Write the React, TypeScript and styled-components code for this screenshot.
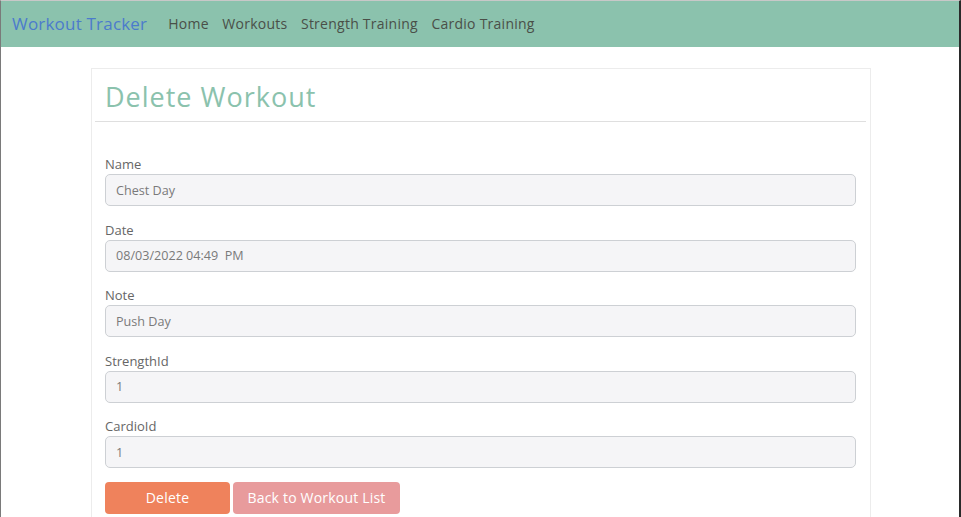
import React from "react";
import styled, { createGlobalStyle } from "styled-components";

const GlobalStyle = createGlobalStyle`
  html, body { margin: 0; padding: 0; }
  body {
    background: #fff;
    font-family: "Open Sans", "Liberation Sans", sans-serif;
    width: 961px;
    height: 517px;
    box-sizing: border-box;
    border-left: 1px solid #7a7a7a;
    border-top: 1px solid #c8c8c8;
    border-right: 2px solid #2a2a2a;
    overflow: hidden;
  }
`;

const NavBar = styled.nav`
  height: 46px;
  box-sizing: border-box;
  padding-bottom: 2px;
  background: #8bc2ad;
  display: flex;
  align-items: center;
  padding-left: 11px;
  gap: 21px;
`;

const Brand = styled.a`
  font-family: "Open Sans", sans-serif;
  font-size: 17px;
  color: #4b7bcc;
  letter-spacing: 0.2px;
  text-decoration: none;
`;

const NavLinks = styled.div`
  display: flex;
  gap: 13.5px;
`;

const NavLink = styled.a`
  font-family: "Open Sans", sans-serif;
  font-size: 14px;
  letter-spacing: 0.25px;
  color: #4a4f48;
  text-decoration: none;
`;

const Main = styled.main`
  padding: 21px 0 0 90px;
`;

const Card = styled.section`
  width: 780px;
  height: 460px;
  border: 1px solid #ececec;
  box-sizing: border-box;
  padding: 0 14px 0 13px;
`;

const CardHeader = styled.header`
  margin: 0 -10px;
  padding: 10px 10px 6px;
  border-bottom: 1px solid #dfdfdf;
`;

const Title = styled.h1`
  margin: 0;
  font-family: "Open Sans", sans-serif;
  font-weight: 400;
  font-size: 27px;
  letter-spacing: 1px;
  color: #8bc2ad;
  line-height: 36px;
`;

const Form = styled.form`
  padding-top: 32px;
  display: flex;
  flex-direction: column;
`;

const Group = styled.div`
  display: flex;
  flex-direction: column;
  margin-bottom: 13.5px;
`;

const Label = styled.label`
  font-size: 13px;
  color: #666;
  line-height: 20px;
`;

const Field = styled.div`
  height: 32px;
  box-sizing: border-box;
  border: 1px solid #cdd0d4;
  border-radius: 5px;
  background: #f5f5f7;
  display: flex;
  align-items: center;
  padding-left: 10px;
  font-size: 12.6px;
  color: #7a7a7a;
  white-space: pre;
`;

const Buttons = styled.div`
  display: flex;
  gap: 3px;
`;

const Button = styled.button<{ $bg: string; $w: number }>`
  width: ${(p) => p.$w}px;
  height: 32px;
  border: none;
  border-radius: 4px;
  background: ${(p) => p.$bg};
  color: #fff;
  font-family: "Open Sans", sans-serif;
  font-size: 14px;
  letter-spacing: 0.2px;
  padding: 0;
`;

const fields = [
  { label: "Name", value: "Chest Day" },
  { label: "Date", value: "08/03/2022 04:49  PM" },
  { label: "Note", value: "Push Day" },
  { label: "StrengthId", value: "1" },
  { label: "CardioId", value: "1" },
];

export default function App() {
  return (
    <>
      <GlobalStyle />
      <NavBar>
        <Brand>Workout Tracker</Brand>
        <NavLinks>
          <NavLink>Home</NavLink>
          <NavLink>Workouts</NavLink>
          <NavLink>Strength Training</NavLink>
          <NavLink>Cardio Training</NavLink>
        </NavLinks>
      </NavBar>
      <Main>
        <Card>
          <CardHeader>
            <Title>Delete Workout</Title>
          </CardHeader>
          <Form>
            {fields.map((f) => (
              <Group key={f.label}>
                <Label>{f.label}</Label>
                <Field>{f.value}</Field>
              </Group>
            ))}
            <Buttons>
              <Button type="button" $bg="#ef825c" $w={125}>Delete</Button>
              <Button type="button" $bg="#e89b9c" $w={167}>Back to Workout List</Button>
            </Buttons>
          </Form>
        </Card>
      </Main>
    </>
  );
}
